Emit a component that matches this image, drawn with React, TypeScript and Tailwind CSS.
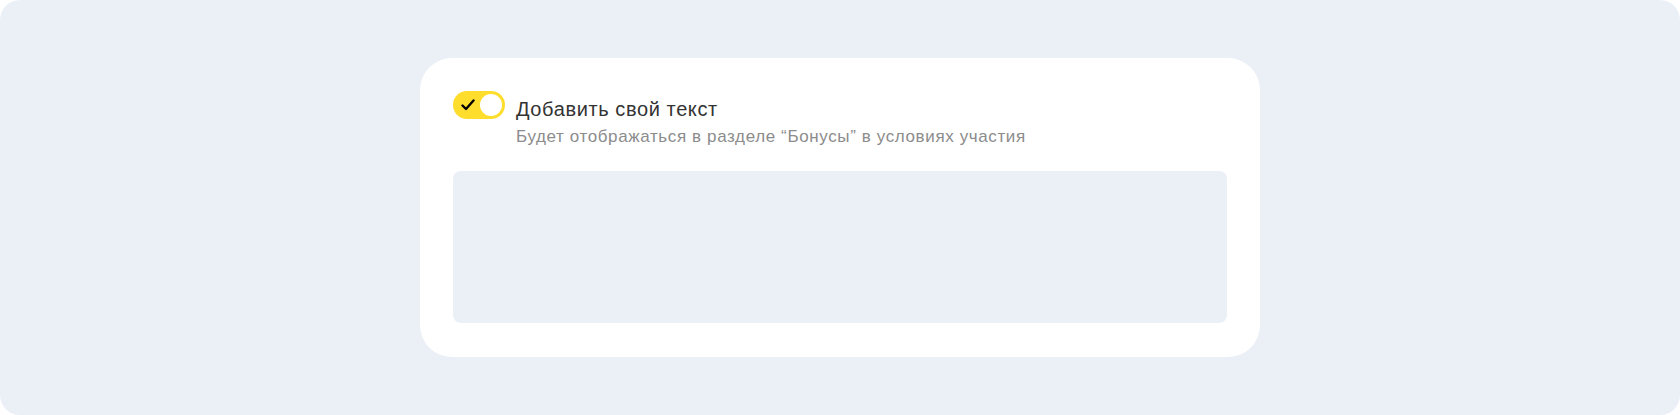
import React, { useState } from 'react';

function Toggle({ checked, onChange }: { checked: boolean; onChange: (v: boolean) => void }) {
  return (
    <button
      type="button"
      role="switch"
      aria-checked={checked}
      onClick={() => onChange(!checked)}
      className={`relative flex h-[28px] w-[52px] shrink-0 items-center rounded-full transition-colors ${
        checked ? 'bg-[#ffdd2d]' : 'bg-[#dde1e7]'
      }`}
    >
      {checked && (
        <svg
          className="absolute left-[8px] top-[7px]"
          width="14"
          height="14"
          viewBox="0 0 14 14"
          fill="none"
        >
          <path
            d="M1.5 7.5L5 11L12.5 2.5"
            stroke="#000"
            strokeWidth="2.4"
            strokeLinecap="round"
            strokeLinejoin="round"
          />
        </svg>
      )}
      <span
        className={`absolute top-[3px] h-[22px] w-[22px] rounded-full bg-white transition-all ${
          checked ? 'left-[27px]' : 'left-[3px]'
        }`}
      />
    </button>
  );
}

export default function App() {
  const [enabled, setEnabled] = useState(true);

  return (
    <div className="h-[415px] w-full bg-white" style={{ fontFamily: '"Liberation Sans", Arial, sans-serif' }}>
      <div className="flex h-full w-full items-center justify-center rounded-[20px] bg-[#ebf0f7]">
        <div className="w-[840px] rounded-[32px] bg-white px-[33px] pt-[33px] pb-[34px]">
          {/* Toggle row */}
          <div className="flex items-start gap-[11px]">
            <Toggle checked={enabled} onChange={setEnabled} />
            <div className="pt-[6px]">
              <div className="text-[20px] leading-6 tracking-[0.6px] text-[#333333]">Добавить свой текст</div>
              <div className="mt-[6px] text-[17px] leading-5 tracking-[0.62px] text-[#8c8c8c]">
                Будет отображаться в разделе “Бонусы” в условиях участия
              </div>
            </div>
          </div>

          {/* Text area */}
          <textarea
            className="mt-[24px] block h-[152px] w-full resize-none rounded-[8px] bg-[#ebf0f7] p-4 text-[15px] outline-none"
            disabled={!enabled}
          />
        </div>
      </div>
    </div>
  );
}
